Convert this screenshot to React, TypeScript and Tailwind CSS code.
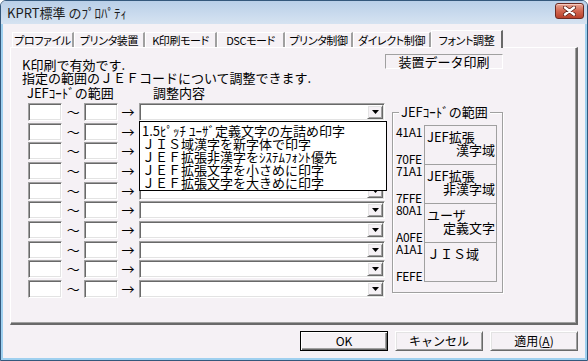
import React from "react";

const tabs = [
  { label: "プロファイル", w: "w-[62px]" },
  { label: "プリンタ装置", w: "w-[71px]" },
  { label: "K印刷モード", w: "w-[72px]" },
  { label: "DSCモード", w: "w-[68px]" },
  { label: "プリンタ制御", w: "w-[68px]" },
  { label: "ダイレクト制御", w: "w-[78px]" },
];

const options = [
  "1.5ﾋﾟｯﾁ ﾕｰｻﾞ定義文字の左詰め印字",
  "ＪＩＳ域漢字を新字体で印字",
  "ＪＥＦ拡張非漢字をｼｽﾃﾑﾌｫﾝﾄ優先",
  "ＪＥＦ拡張文字を小さめに印字",
  "ＪＥＦ拡張文字を大きめに印字",
];

const ranges = [
  { from: "41A1", to: "70FE", l1: "JEF拡張", l2: "漢字域" },
  { from: "71A1", to: "7FFE", l1: "JEF拡張", l2: "非漢字域" },
  { from: "80A1", to: "A0FE", l1: "ユーザ", l2: "定義文字" },
  { from: "A1A1", to: "FEFE", l1: "ＪＩＳ域", l2: "" },
];

const rows = Array.from({ length: 10 }, (_, i) => i);

function DropArrow() {
  return (
    <div className="flex h-full w-[16px] items-center justify-center border border-t-white border-l-white border-b-[#696969] border-r-[#696969] bg-[#f5f1f5] shadow-[inset_1px_1px_0_#e3e3e3,inset_-1px_-1px_0_#a0a0a0]">
      <svg width="7" height="4" viewBox="0 0 7 4">
        <path d="M0 0h7L3.5 4z" fill="#000" />
      </svg>
    </div>
  );
}

function CodeBox() {
  return (
    <div className="h-[18px] w-[34px] border border-t-[#a0a0a0] border-l-[#a0a0a0] border-b-white border-r-white bg-white shadow-[inset_1px_1px_0_#696969,inset_-1px_-1px_0_#e3e3e3]" />
  );
}

function Row({ open }: { open: boolean }) {
  return (
    <div className="flex h-[18px] items-center">
      <div className="ml-[6px]">
        <CodeBox />
      </div>
      <span className="w-[23px] text-center leading-[18px]">～</span>
      <CodeBox />
      <span className="w-[22px] pl-[4px] leading-[18px]">→</span>
      <div className="relative flex h-[18px] w-[246px] shrink-0 justify-end border border-t-[#a0a0a0] border-l-[#a0a0a0] border-b-white border-r-white bg-white p-px shadow-[inset_1px_1px_0_#696969,inset_-1px_-1px_0_#e3e3e3]">
        <DropArrow />
        {open && (
          <ul className="absolute left-[-1px] top-[17px] z-20 w-[248px] border border-black bg-white pb-[1px] pl-[2px] pt-[2px] text-[13px] leading-[13px]">
            {options.map((o) => (
              <li key={o} className="whitespace-nowrap">
                {o}
              </li>
            ))}
          </ul>
        )}
      </div>
    </div>
  );
}

function RaisedButton({ children, def }: { children: React.ReactNode; def?: boolean }) {
  return (
    <button
      className={
        def
          ? "h-[20px] w-[88px] border border-black bg-[#f5f1f5] p-0 text-[12px] leading-[16px] shadow-[inset_1px_1px_0_#fff,inset_-1px_-1px_0_#696969,inset_-2px_-2px_0_#a0a0a0]"
          : "h-[20px] w-[88px] border border-t-white border-l-white border-b-[#696969] border-r-[#696969] bg-[#f5f1f5] p-0 text-[12px] leading-[18px] shadow-[inset_1px_1px_0_#e3e3e3,inset_-1px_-1px_0_#a0a0a0]"
      }
    >
      {children}
    </button>
  );
}

export default function App() {
  return (
    <div className="flex h-[361px] w-[588px] flex-col overflow-hidden rounded-t-[6px] border border-[#34587c] bg-[#f5f1f5] font-['Noto_Sans_CJK_JP',sans-serif] text-black">
      {/* title bar */}
      <div className="flex h-[23px] shrink-0 items-center justify-between bg-gradient-to-b from-[#b9cfe8] to-[#d6e3f1] pl-[6px] pr-[3px]">
        <span className="text-[13px] leading-[14px] text-[#1c1c1c]">KPRT標準 のﾌﾟﾛﾊﾟﾃｨ</span>
        <div className="mt-[-3px] flex h-[16px] w-[29px] items-center justify-center rounded-[3px] border border-[#6b2a22] bg-gradient-to-b from-[#e7a595] via-[#d2664f] to-[#b8402a] shadow-[inset_0_1px_0_#f5c9bd]">
          <svg width="13" height="10" viewBox="0 0 13 10">
            <path d="M2 1.5l9 7M11 1.5l-9 7" stroke="#5a2219" strokeWidth="4" strokeLinecap="round" />
            <path d="M2 1.5l9 7M11 1.5l-9 7" stroke="#fff" strokeWidth="2.4" strokeLinecap="round" />
          </svg>
        </div>
      </div>

      {/* body */}
      <div className="flex flex-1 flex-col border-x-2 border-b-2 border-[#9fd0ef]">
        {/* tabs */}
        <div className="mt-[6px] flex h-[17px] pl-[9px] text-[11px] tracking-[-0.4px] [font-feature-settings:'palt']">
          {tabs.map((t) => (
            <div
              key={t.label}
              className={`${t.w} mt-[2px] flex h-[15px] items-center justify-center whitespace-nowrap border-l border-t border-r-2 border-l-white border-t-white border-r-[#a0a0a0] leading-[14px]`}
            >
              {t.label}
            </div>
          ))}
          <div className="relative z-10 flex h-[18px] w-[72px] items-center justify-center border-l border-t border-r-2 border-l-white border-t-white border-r-[#696969] bg-[#f5f1f5] leading-[14px]">
            フォント調整
          </div>
        </div>

        {/* panel */}
        <div className="ml-[7px] flex h-[278px] w-[568px] border-l border-t border-r-2 border-b-2 border-l-white border-t-white border-r-[#696969] border-b-[#696969] pl-[11px] shadow-[inset_-1px_-1px_0_#a0a0a0]">
          <div className="w-[363px] shrink-0 pt-[10px] text-[13px] leading-[13px]">
            <p className="whitespace-nowrap">K印刷で有効です.</p>
            <p className="whitespace-nowrap">指定の範囲のＪＥＦコードについて調整できます.</p>
            <div className="mt-[2px] flex whitespace-nowrap">
              <span className="ml-[5px] w-[126px]">JEFｺｰﾄﾞの範囲</span>
              <span>調整内容</span>
            </div>
            <div className="mt-[4px] flex flex-col gap-[1.67px] text-[13px]">
              {rows.map((r) => (
                <Row key={r} open={r === 0} />
              ))}
            </div>
          </div>

          <div className="w-[118px] shrink-0">
            <div className="mt-[6px] flex h-[15px] items-center justify-center border border-t-[#a0a0a0] border-l-[#a0a0a0] border-b-white border-r-white text-[13px] leading-[13px]">
              装置データ印刷
            </div>
            <div className="relative ml-[7px] mt-[43px] h-[181px] w-[111px] border border-[#a0a0a0] pl-[3px] pt-[12px] shadow-[inset_1px_1px_0_#fff,1px_1px_0_#fff]">
              <span className="absolute left-[6px] top-[-8px] bg-[#f5f1f5] px-[2px] text-[13px] leading-[13px] whitespace-nowrap">
                JEFｺｰﾄﾞの範囲
              </span>
              <div className="flex">
                <div className="w-[28px] pt-px text-[12px] leading-[12px] tracking-[-0.3px]">
                  {ranges.map((g) => (
                    <div key={g.from} className="flex h-[39px] flex-col justify-between">
                      <span>{g.from}</span>
                      <span>{g.to}</span>
                    </div>
                  ))}
                </div>
                <div className="w-[73px] border-x border-t border-[#a0a0a0] text-[13px] leading-[13px]">
                  {ranges.map((g) => (
                    <div key={g.from} className="h-[39px] border-b border-[#a0a0a0] pl-[2px] pr-px pt-[4px]">
                      <div className="whitespace-nowrap">{g.l1}</div>
                      {g.l2 && <div className="whitespace-nowrap text-right">{g.l2}</div>}
                    </div>
                  ))}
                </div>
              </div>
            </div>
          </div>
        </div>

        {/* buttons */}
        <div className="mt-[6px] flex justify-end gap-[7px] pr-[7px]">
          <RaisedButton def>OK</RaisedButton>
          <RaisedButton>キャンセル</RaisedButton>
          <RaisedButton>
            適用(<span className="underline">A</span>)
          </RaisedButton>
        </div>
      </div>
    </div>
  );
}
